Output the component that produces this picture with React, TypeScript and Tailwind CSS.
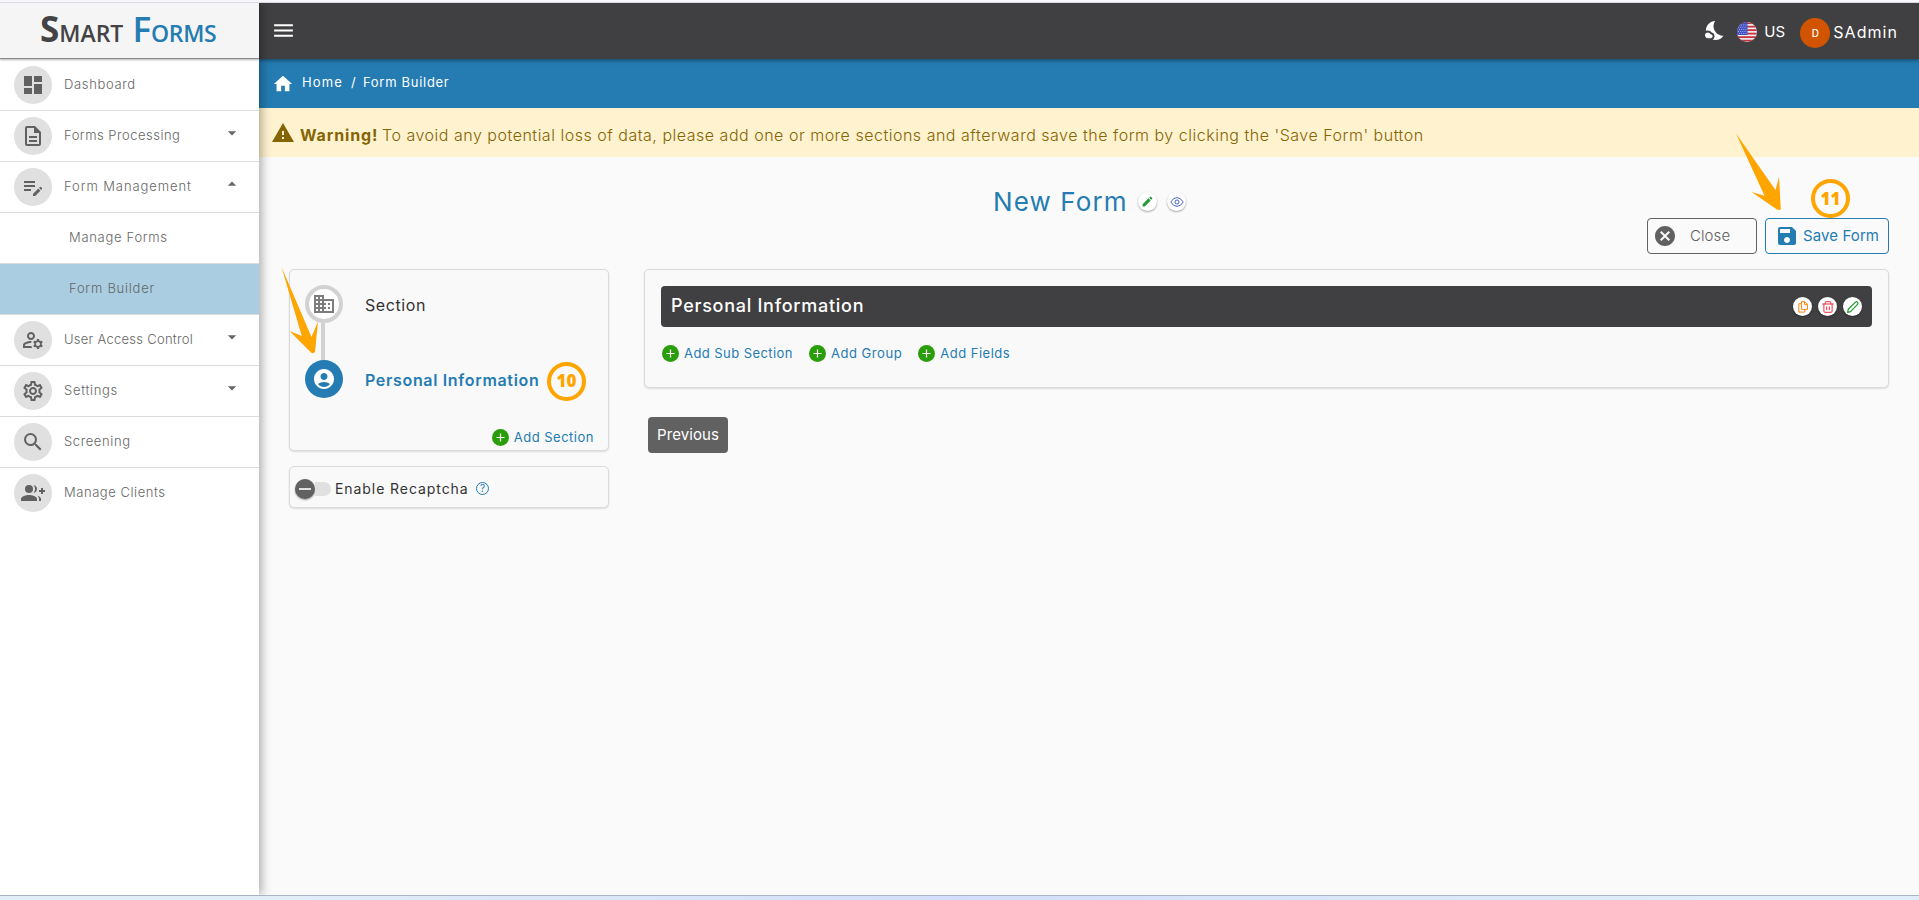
import type { ReactNode } from "react";
import {
  MdAccountCircle,
  MdArrowDropDown,
  MdArrowDropUp,
  MdCancel,
  MdDashboard,
  MdEdit,
  MdHome,
  MdMenu,
  MdNightsStay,
  MdOutlineDescription,
  MdOutlineManageAccounts,
  MdOutlineSettings,
  MdSave,
  MdSearch,
  MdWarning,
} from "react-icons/md";

type NavItem = {
  label: string;
  icon?: ReactNode;
  caret?: "up" | "down";
  active?: boolean;
  labelClass: string;
};

const EditNoteIcon = () => (
  <svg viewBox="0 0 24 24" className="w-6 h-6" fill="currentColor">
    <path d="M3 10h11v2H3v-2zm0-2h11V6H3v2zm0 8h7v-2H3v2zm15.01-3.13.71-.71a.996.996 0 0 1 1.41 0l.71.71c.39.39.39 1.02 0 1.41l-.71.71-2.12-2.12zm-.71.71-5.3 5.3V21h2.12l5.3-5.3-2.12-2.12z" />
  </svg>
);

const ClientsIcon = () => (
  <svg viewBox="0 0 24 24" className="w-6 h-6" fill="currentColor">
    <path d="M22 9V7h-2v2h-2v2h2v2h2v-2h2V9z" />
    <circle cx="8" cy="8" r="4" />
    <path d="M8 14c-2.67 0-8 1.34-8 4v2h16v-2c0-2.66-5.33-4-8-4zM12.51 4.05C13.43 5.11 14 6.49 14 8s-.57 2.89-1.49 3.95C14.47 11.7 16 10.04 16 8s-1.53-3.7-3.49-3.95zM16.53 14.83C17.42 15.66 18 16.7 18 18v2h2v-2c0-1.45-1.59-2.51-3.47-3.17z" />
  </svg>
);

const BuildingIcon = () => (
  <svg viewBox="0 0 24 24" className="w-6 h-6 shrink-0" fill="currentColor">
    <path d="M12 7V3H2v18h20V7H12zM6 19H4v-2h2v2zm0-4H4v-2h2v2zm0-4H4V9h2v2zm0-4H4V5h2v2zm4 12H8v-2h2v2zm0-4H8v-2h2v2zm0-4H8V9h2v2zm0-4H8V5h2v2zm10 12h-8v-2h2v-2h-2v-2h2v-2h-2V9h8v10zm-2-8h-2v2h2v-2zm0 4h-2v2h2v-2z" />
  </svg>
);

const FlagIcon = () => (
  <svg viewBox="0 0 20 20" className="w-5 h-5">
    <defs>
      <clipPath id="flag">
        <circle cx="10" cy="10" r="10" />
      </clipPath>
    </defs>
    <g clipPath="url(#flag)">
      <rect width="20" height="20" fill="#f1e9ea" />
      <path
        d="M0 1.2h20M0 4.7h20M0 8.2h20M0 11.7h20M0 15.2h20M0 18.7h20"
        stroke="#c4313f"
        strokeWidth="1.7"
      />
      <rect width="10.5" height="13" fill="#3c4fc0" />
      <path
        d="M2 3h8M1 5.2h9M2 7.4h8M1 9.4h9M2 11.4h8"
        stroke="#dfe3ff"
        strokeWidth="0.8"
        strokeDasharray="0.9 1.3"
      />
    </g>
  </svg>
);

const CopyIcon = () => (
  <svg viewBox="0 0 12 12" className="w-3 h-3" fill="none" stroke="#ff8412" strokeLinejoin="round">
    <path d="M4.5 .7h3.300l2.700 2.700v5H4.500z" />
    <path d="M7.500 .9v2.800h2.800M4.300 2.700H1.800v8.400h6V8.600" />
  </svg>
);

const TrashIcon = () => (
  <svg viewBox="0 0 12 12" className="w-3 h-3" fill="none" stroke="#e0323c" strokeLinecap="round" strokeLinejoin="round">
    <path d="M.7 3h10.600M3.300 2.800V1.300q0-.6.6-.6h4.200q.6 0 .6.6v1.500M1.900 3.200v7q0 1.100 1 1.100h6.200q1 0 1-1.100v-7M4.700 5.800v3M7.300 5.800v3" />
  </svg>
);

const PencilIcon = () => (
  <svg viewBox="0 0 12 12" className="w-3 h-3" fill="none" stroke="#1f9a2f" strokeWidth="1.2" strokeLinejoin="round">
    <path d="M.7 11.300l.5-3L8.500 1.100q1-.8 1.900.1t.3 2L3.600 10.600z" />
  </svg>
);

const EyeIcon = () => (
  <svg viewBox="0 0 14 12" className="w-3.5 h-3" fill="none" stroke="#4a64c8">
    <path d="M.8 6Q3.300 1.600 7 1.600T13.200 6Q10.700 10.400 7 10.400T.8 6z" />
    <circle cx="7" cy="6" r="2" />
  </svg>
);

const navItems: NavItem[] = [
  { label: "Dashboard", icon: <MdDashboard className="w-6 h-6" />, labelClass: "tracking-[0.65px]" },
  { label: "Forms Processing", icon: <MdOutlineDescription className="w-6 h-6" />, caret: "down", labelClass: "tracking-[0.5px]" },
  { label: "Form Management", icon: <EditNoteIcon />, caret: "up", labelClass: "tracking-[0.92px]" },
  { label: "Manage Forms", labelClass: "tracking-[0.7px]" },
  { label: "Form Builder", active: true, labelClass: "tracking-[0.75px]" },
  { label: "User Access Control", icon: <MdOutlineManageAccounts className="w-6 h-6" />, caret: "down", labelClass: "tracking-[0.27px]" },
  { label: "Settings", icon: <MdOutlineSettings className="w-6 h-6" />, caret: "down", labelClass: "tracking-[0.7px]" },
  { label: "Screening", icon: <MdSearch className="w-6 h-6" />, labelClass: "tracking-[0.6px]" },
  { label: "Manage Clients", icon: <ClientsIcon />, labelClass: "tracking-[0.55px]" },
];

function AddLink({ label, className }: { label: string; className: string }) {
  return (
    <button className="flex items-center h-[17px] text-[#247cb2]">
      <svg viewBox="0 0 17 17" className="w-[17px] h-[17px] mr-[5px] shrink-0">
        <circle cx="8.5" cy="8.5" r="8.5" fill="#2a9d0a" />
        <path d="M8.5 4.5v8M4.5 8.5h8" stroke="#fff" strokeWidth="1.2" />
      </svg>
      <span className={`text-[13px] leading-[17px] whitespace-nowrap ${className}`}>{label}</span>
    </button>
  );
}

function RoundButton({ children }: { children: ReactNode }) {
  return (
    <button className="w-[19px] h-[19px] rounded-full bg-white flex items-center justify-center shadow-[0_1px_2px_rgba(0,0,0,0.35)]">
      {children}
    </button>
  );
}

function Sidebar() {
  return (
    <aside className="w-[259px] shrink-0 bg-white relative z-10 shadow-[2px_0_10px_rgba(0,0,0,0.35)]">
      <div className="h-[56px] bg-[#f5f5f5] border-b border-[#8b8b8b] shadow-[0_1px_2px_rgba(0,0,0,0.3)] pl-[40px] flex items-baseline font-['Open_Sans',sans-serif] font-semibold text-[#434345] whitespace-nowrap">
        <span className="text-[35px] leading-[51px] font-bold">S</span>
        <span className="text-[23px]">MART</span>
        <span className="text-[35px] leading-[51px] ml-[9px] text-[#247cb2]">F</span>
        <span className="text-[23px] tracking-[-0.3px] text-[#247cb2]">ORMS</span>
      </div>
      <nav className="pt-px">
        {navItems.map((item, i) => (
          <div
            key={item.label}
            className={`flex items-center text-[#666] ${
              i < navItems.length - 1 ? "h-[51px] border-b border-[#dcdcdc]" : "h-[50px]"
            } ${item.active ? "bg-[#aacde2]" : ""} ${item.icon ? "pl-[14px]" : "pl-[69px]"}`}
          >
            {item.icon && (
              <span className="w-[38px] h-[38px] mr-[12px] rounded-full bg-[#e0e0e0] flex items-center justify-center text-[#616161]">
                {item.icon}
              </span>
            )}
            <span className={`text-[13px] font-light whitespace-nowrap ${item.labelClass}`}>{item.label}</span>
            {item.caret && (
              <span className="ml-auto mr-[17px] mb-[6px]">
                {item.caret === "up" ? (
                  <MdArrowDropUp className="w-5 h-5" />
                ) : (
                  <MdArrowDropDown className="w-5 h-5" />
                )}
              </span>
            )}
          </div>
        ))}
      </nav>
    </aside>
  );
}

function TopBar() {
  return (
    <header className="h-[56px] bg-[#404042] text-white flex items-center pl-[12px] pr-[21px] relative shadow-[0_1px_4px_rgba(0,0,0,0.5)]">
      <MdMenu className="w-[25px] h-[25px] mb-[2px]" />
      <div className="ml-auto flex items-center">
        <MdNightsStay className="w-[23px] h-[23px] mb-[2px]" />
        <span className="ml-[10px] mt-[2px]">
          <FlagIcon />
        </span>
        <span className="ml-[7px] mt-[2px] w-[36px] text-[15px]">US</span>
        <span className="w-[30px] h-[30px] mt-[4px] rounded-full bg-[#d35400] flex items-center justify-center text-[10px] font-medium">
          D
        </span>
        <span className="ml-[3px] mt-[2px] text-[16px] tracking-[1.05px]">SAdmin</span>
      </div>
    </header>
  );
}

function SectionStepper() {
  return (
    <div className="h-[182px] rounded-[5px] border border-[#dadada] bg-[#f9f9f9] shadow-[0_1px_2px_rgba(0,0,0,0.12)] pl-[15px] pt-[15px]">
      <div className="flex items-center h-[38px]">
        <span className="w-[38px] h-[38px] rounded-full border-4 border-[#d2d2d2] bg-white flex items-center justify-center text-[#7d7d7d]">
          <BuildingIcon />
        </span>
        <span className="ml-[22px] mt-[2px] text-[16px] text-[#333] tracking-[0.6px]">Section</span>
      </div>
      <div className="w-[4px] h-[37px] ml-[16px] bg-[#d2d2d2]" />
      <div className="flex items-center h-[38px]">
        <span className="w-[38px] h-[38px] rounded-full bg-[#247cb2] flex items-center justify-center text-white">
          <MdAccountCircle className="w-6 h-6" />
        </span>
        <span className="ml-[22px] mt-[2px] w-[182px] text-[16px] font-semibold text-[#247cb2] tracking-[0.67px] whitespace-nowrap">
          Personal Information
        </span>
        <span className="w-[39px] h-[39px] mt-[4px] rounded-full border-4 border-[#ffa500] flex items-center justify-center text-[17px] font-extrabold text-[#ffa500] font-['Open_Sans',sans-serif]">
          10
        </span>
      </div>
      <div className="flex justify-end mt-[31px] pr-[14px]">
        <AddLink label="Add Section" className="tracking-[0.5px]" />
      </div>
    </div>
  );
}

export default function App() {
  return (
    <div className="w-[1919px] h-[900px] overflow-hidden relative flex flex-col bg-[#fafafa] font-[Inter,sans-serif]">
      <div className="h-[3px] shrink-0 bg-[#f9f6fe] border-b border-[#dcd8e4]" />

      <div className="flex h-[892px] overflow-hidden">
        <Sidebar />

        <div className="flex-1 min-w-0">
          <TopBar />

          {/* Breadcrumb */}
          <div className="h-[49px] bg-[#247cb2] text-white flex items-center pl-[13px] text-[13px]">
            <MdHome className="w-[22px] h-[22px]" />
            <span className="ml-[8px] mb-[2px] w-[49px] tracking-[1.1px]">Home</span>
            <span className="w-[12px] mb-[2px]">/</span>
            <span className="mb-[2px] tracking-[0.7px]">Form Builder</span>
          </div>

          {/* Warning banner */}
          <div className="h-[49px] bg-[#fff2ce] text-[#856404] flex items-center pl-[12px] pt-[6px] text-[16px] whitespace-nowrap">
            <MdWarning className="w-[24px] h-[24px] mb-[6px]" />
            <span className="ml-[5px] mb-[2px] w-[82px] font-bold tracking-[0.85px]">Warning!</span>
            <span className="mb-[2px] font-light tracking-[0.51px]">
              To avoid any potential loss of data, please add one or more sections and afterward save the form by
              clicking the 'Save Form' button
            </span>
          </div>

          <main className="pl-[30px] pr-[30px]">
            {/* Form title */}
            <div className="h-[61px] flex pl-[704px] pt-[25px]">
              <h1 className="w-[145px] text-[26px] leading-[40px] text-[#247cb2] whitespace-nowrap tracking-[1.1px]">
                New Form
              </h1>
              <div className="flex gap-[10px] pt-[10px]">
                <RoundButton>
                  <MdEdit className="w-[13px] h-[13px] text-[#219a38]" />
                </RoundButton>
                <RoundButton>
                  <EyeIcon />
                </RoundButton>
              </div>
            </div>

            <div className="flex justify-end gap-[8px] text-[15px]">
              <button className="w-[110px] h-[36px] border border-[#616161] rounded-[4px] flex items-center pl-[5px] text-[#616161] font-light">
                <MdCancel className="w-[24px] h-[24px] mr-[13px]" />
                <span className="tracking-[0.1px]">Close</span>
              </button>
              <button className="w-[124px] h-[36px] border border-[#247cb2] rounded-[4px] flex items-center pl-[9px] text-[#247cb2] whitespace-nowrap">
                <MdSave className="w-[24px] h-[24px] mr-[4px]" />
                <span className="tracking-[0.1px]">Save Form</span>
              </button>
            </div>

            <div className="flex gap-[35px] mt-[15px]">
              <div className="w-[320px] shrink-0">
                <SectionStepper />
                <div className="mt-[15px] h-[42px] rounded-[5px] border border-[#dadada] bg-[#f9f9f9] shadow-[0_1px_2px_rgba(0,0,0,0.12)] flex items-center pl-[5px] pt-[3px]">
                  <span className="w-[20px] h-[20px] rounded-full bg-[#616161] shadow-[0_1px_2px_rgba(0,0,0,0.4)] flex items-center justify-center">
                    <span className="w-[12px] h-[2px] bg-[#e0e0e0]" />
                  </span>
                  <span className="w-[16px] h-[14px] rounded-r-full bg-[#e0e0e0]" />
                  <span className="ml-[4px] w-[141px] text-[14px] text-[#333] whitespace-nowrap tracking-[0.93px]">
                    Enable Recaptcha
                  </span>
                  <span className="w-[13px] h-[13px] mb-px rounded-full border border-[#247cb2] text-[#247cb2] text-[10px] leading-[11px] text-center">
                    ?
                  </span>
                </div>
              </div>

              <div className="flex-1">
                <div className="h-[119px] rounded-[5px] border border-[#dadada] bg-[#f9f9f9] shadow-[0_1px_2px_rgba(0,0,0,0.12)] px-[16px] pt-[16px]">
                  <div className="h-[41px] rounded-[4px] bg-[#404042] flex items-center pl-[10px] pr-[10px]">
                    <h2 className="mb-[2px] text-[18px] font-medium text-white tracking-[0.73px]">Personal Information</h2>
                    <div className="ml-auto flex gap-[6px]">
                      <RoundButton>
                        <CopyIcon />
                      </RoundButton>
                      <RoundButton>
                        <TrashIcon />
                      </RoundButton>
                      <RoundButton>
                        <PencilIcon />
                      </RoundButton>
                    </div>
                  </div>
                  <div className="flex gap-[16px] mt-[18px] pl-px">
                    <AddLink label="Add Sub Section" className="tracking-[0.43px]" />
                    <AddLink label="Add Group" className="tracking-[0.55px]" />
                    <AddLink label="Add Fields" className="tracking-[0.5px]" />
                  </div>
                </div>
                <button className="mt-[29px] ml-[4px] w-[80px] h-[36px] rounded-[4px] bg-[#616161] text-white text-[15px] tracking-[0.1px]">
                  Previous
                </button>
              </div>
            </div>
          </main>
        </div>
      </div>

      <div className="h-[5px] shrink-0 border-t border-[#aab4c4] bg-linear-to-r from-[#e1edf7] from-15% via-[#d3dffa] via-50% to-[#dfeef8] to-90%" />

      {/* Step callouts drawn over the page */}
      <svg viewBox="0 0 1919 900" className="absolute inset-0 w-[1919px] h-[900px] z-20 pointer-events-none" fill="#ffa500">
        <path d="M281.5 267 L311.5 337 L318 321.5 L315 352 Q313.5 354 311 352.5 L289.5 331 L301.8 336 Z" />
        <path d="M1736 133.5 L1775.5 190 L1779 177 L1780.8 209 Q1780 210.5 1777 209.5 L1751.5 192 L1764.5 195.7 Z" />
      </svg>
      <span className="absolute z-20 left-[1811px] top-[179px] w-[39px] h-[39px] rounded-full border-4 border-[#ffa500] flex items-center justify-center text-[17px] font-extrabold text-[#ffa500] font-['Open_Sans',sans-serif]">
        11
      </span>
    </div>
  );
}
